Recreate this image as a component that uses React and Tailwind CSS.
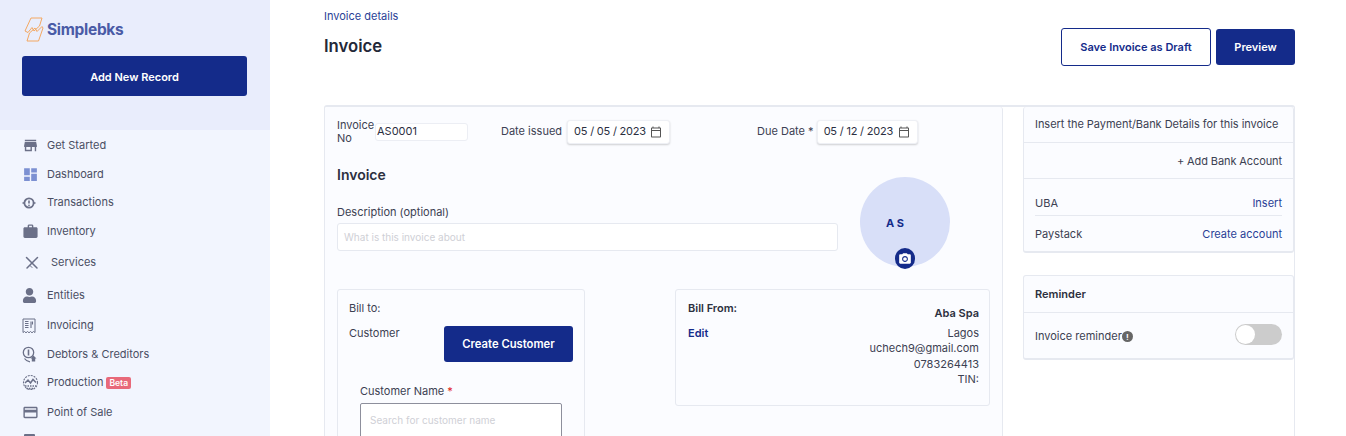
import React from "react";
import { MdStore, MdDashboard, MdWork, MdCreditCard, MdCameraAlt, MdOutlineCalendarToday } from "react-icons/md";
import { FaUser } from "react-icons/fa";

const Logo = () => (
  <svg width="20" height="25" viewBox="0 0 20 25" fill="none" stroke="#f4a862" strokeWidth="1" strokeLinejoin="round">
    <path d="M7 1H18L15.5 9L10 14L8 10.5L4 15.5L1 14Z" />
    <path d="M18 9.5L19 11L14.5 24H3L5.5 16L11 11L13 14.5Z" />
  </svg>
);

const Debtors = () => (
  <svg width="17" height="17" viewBox="0 0 17 17" fill="none" stroke="#6b7088" strokeWidth="1.3">
    <circle cx="6.5" cy="6.5" r="5.2" />
    <path d="M6.5 3.5V9.5" strokeWidth="1.6" />
    <path d="M11.5 9.5L8.5 12.5H9.8V15.5H13.2V12.5H14.5Z" fill="#6b7088" stroke="none" />
    <path d="M2.5 12.5Q4.5 15.5 8 15.8" />
  </svg>
);

const Production = () => (
  <svg width="17" height="17" viewBox="0 0 17 17" fill="none" stroke="#6b7088" strokeWidth="1.1">
    <circle cx="8.5" cy="8.5" r="7" strokeDasharray="2 1" />
    <path d="M3 9L6 6L8.5 9L11 5.5L14 8.5" strokeWidth="1.5" />
    <path d="M3 12H14M4.5 14.5H12.5" strokeDasharray="1.5 1" strokeWidth="1.6" />
  </svg>
);

const Transactions = () => (
  <svg width="14" height="14" viewBox="0 0 14 14" fill="none" stroke="#6b7088">
    <circle cx="7" cy="7" r="4.6" strokeWidth="1.8" />
    <path d="M7 4.4V7.6" strokeWidth="1.6" />
    <circle cx="7" cy="9.4" r="0.8" fill="#6b7088" stroke="none" />
    <path d="M0.5 7H2.6M11.4 7H13.5" strokeWidth="1.3" />
  </svg>
);

const Tools = () => (
  <svg width="14" height="14" viewBox="0 0 14 14" fill="none" stroke="#6b7088" strokeWidth="1.5" strokeLinecap="round">
    <path d="M1.5 1.5L12 12" />
    <path d="M12.5 1.5L2 12" />
    <path d="M5 9.5L7 11.5M9 5L10.5 3.5" strokeWidth="1" />
  </svg>
);

const Receipt = () => (
  <svg width="14" height="16" viewBox="0 0 14 16" fill="none" stroke="#6b7088" strokeWidth="1">
    <path d="M1 1H13V14.5L11.5 13.5L10 14.8L8.5 13.5L7 14.8L5.5 13.5L4 14.8L2.5 13.5L1 14.5Z" />
    <path d="M3 3.5H6.5M3 5.5H6.5M3 7.5H6.5M3 9.5H6.5M9 3.5V10M10.5 3.5V6.5" strokeWidth="1.1" />
  </svg>
);

const Bar = () => (
  <svg width="14" height="16" viewBox="0 0 14 16" fill="#6b7088">
    <rect x="2" y="1" width="11" height="14" rx="1" />
  </svg>
);

const items = [
  { label: "Get Started", icon: <MdStore size={17} color="#6b7088" />, row: "h-[29px]", gap: "w-[25px]" },
  { label: "Dashboard", icon: <MdDashboard size={17} color="#7c90d2" />, row: "h-[28px]", gap: "w-[25px]" },
  { label: "Transactions", icon: <Transactions />, row: "h-[29px]", gap: "w-[25px]" },
  { label: "Inventory", icon: <MdWork size={17} color="#6b7088" />, row: "h-[29px]", gap: "w-[25px]" },
  { label: "Services", icon: <Tools />, row: "h-[33px]", gap: "w-[29px] pl-[3px]" },
  { label: "Entities", icon: <FaUser size={15} color="#6b7088" />, row: "h-[32px]", gap: "w-[25px]" },
  { label: "Invoicing", icon: <Receipt />, row: "h-[29px]", gap: "w-[25px]" },
  { label: "Debtors & Creditors", icon: <Debtors />, row: "h-[28px]", gap: "w-[25px]" },
  { label: "Production", icon: <Production />, row: "h-[29px]", gap: "w-[25px]", beta: true },
  { label: "Point of Sale", icon: <MdCreditCard size={17} color="#6b7088" />, row: "h-[30px]", gap: "w-[25px]" },
  { label: "", icon: <Bar />, row: "h-[28px]", gap: "w-[25px]" },
];

const DateBox = ({ value, className = "" }) => (
  <div className={`flex h-[24px] items-center justify-between rounded-[3px] border border-[#eef0f5] bg-white pl-[6px] pr-[7px] text-[11px] tracking-[-0.2px] text-[#2b2f3f] shadow-[0_1px_2px_rgba(0,0,0,0.18)] ${className}`}>
    <span>{value}</span>
    <MdOutlineCalendarToday size={12} color="#555" />
  </div>
);

export default function App() {
  return (
    <div className="flex h-[436px] overflow-hidden bg-white font-['Inter',sans-serif] text-[11px] text-[#3c4152]">
      <aside className="h-full w-[270px] shrink-0 bg-[#f2f5fe]">
        <div className="h-[130px] bg-[#e9edfc] px-[22px] pt-[17px]">
          <div className="flex h-[25px] items-center gap-[3px] pl-[2px]">
            <Logo />
            <span className="text-[15.5px] font-bold tracking-[-0.3px] text-[#4a5ba6]">Simplebks</span>
          </div>
          <button className="mt-[14px] flex h-[40px] w-[225px] items-center justify-center rounded-[3px] bg-[#142b8a] pt-[2px] text-[11px] font-semibold text-white">
            Add New Record
          </button>
        </div>
        <nav className="flex flex-col pl-[22px] pt-[1px]">
          {items.map((it, i) => (
            <div key={i} className={`flex items-center ${it.row}`}>
              <span className={`flex shrink-0 items-center ${it.gap}`}>{it.icon}</span>
              <span className="text-[#4a4e63]">{it.label}</span>
              {it.beta && (
                <span className="ml-[3px] rounded-[2px] bg-[#e8697a] px-[3px] text-[8.5px] font-semibold leading-[12px] text-white">Beta</span>
              )}
            </div>
          ))}
        </nav>
      </aside>

      <main className="min-w-0 flex-1 pl-[54px] pr-[51px]">
        <div className="flex h-[105px] items-start justify-between">
          <div>
            <p className="mt-[9px] text-[11px] leading-[15px] text-[#2a3f96]">Invoice details</p>
            <h1 className="mt-[7px] text-[16.7px] font-semibold leading-[30px] text-[#232838]">Invoice</h1>
          </div>
          <div className="mt-[28px] flex items-center gap-[5px]">
            <button className="flex h-[38px] w-[150px] items-center justify-center rounded-[3px] border border-[#142b8a] bg-white text-[11px] font-semibold text-[#142b8a]">
              Save Invoice as Draft
            </button>
            <button className="flex h-[36px] w-[79px] items-center justify-center rounded-[3px] bg-[#142b8a] text-[11px] font-semibold text-white">
              Preview
            </button>
          </div>
        </div>

        <div className="flex h-[400px] items-start gap-[20px] rounded-[3px] border-t-2 border-l border-r border-[#e6e9f0]">
          <section className="h-full w-[678px] shrink-0 rounded-[3px] border-r border-[#e6e9f0] bg-[#fbfcff] px-[12px]">
            <div className="flex h-[48px] items-center pt-[1px]">
              <label className="w-[38px] leading-[13px]">Invoice No</label>
              <div className="flex h-[18px] w-[93px] items-center rounded-[3px] border border-[#eceef4] bg-white pl-[1px] text-[#2b2f3f]">AS0001</div>
              <label className="ml-[33px]">Date issued</label>
              <DateBox value="05 / 05 / 2023" className="ml-[5px] w-[103px]" />
              <label className="ml-[87px]">Due Date *</label>
              <DateBox value="05 / 12 / 2023" className="ml-[3px] w-[101px]" />
            </div>
            <div className="flex h-[113px]">
              <div className="w-[501px]">
                <h2 className="mt-[8px] text-[14px] font-semibold leading-[24px] text-[#2c3040]">Invoice</h2>
                <p className="mt-[17px] leading-[16px] text-[#3c4152]">Description (optional)</p>
                <div className="mt-[3px] flex h-[28px] items-center rounded-[3px] border border-[#e6e9f0] bg-white pl-[6px] text-[10px] text-[#cfd0d6]">
                  What is this invoice about
                </div>
              </div>
              <div className="relative ml-[22px] mt-[22px] flex h-[90px] w-[90px] items-center justify-center rounded-full bg-[#d8dff8] pr-[20px] pt-[3px] text-[11px] font-bold text-[#142b8a]">
                A S
                <span className="absolute bottom-[-2px] left-[35px] flex h-[21px] w-[20px] items-center justify-center rounded-full bg-[#142b8a]">
                  <MdCameraAlt size={14} color="white" />
                </span>
              </div>
            </div>
            <div className="mt-[21px] flex items-start gap-[90px]">
              <div className="h-[200px] w-[248px] shrink-0 rounded-[3px] border border-[#e6e9f0] px-[11px] pt-[11px]">
                <p className="leading-[15px]">Bill to:</p>
                <div className="mt-[1px] flex items-start justify-between">
                  <p className="mt-[9px] leading-[15px]">Customer</p>
                  <button className="mt-[9px] flex h-[36px] w-[129px] items-center justify-center rounded-[3px] bg-[#142b8a] text-[11.25px] font-semibold text-white">
                    Create Customer
                  </button>
                </div>
                <div className="pl-[11px] pt-[22px]">
                  <p className="leading-[15px]">Customer Name <span className="text-[#e02020]">*</span></p>
                  <div className="mt-[4px] flex h-[40px] w-[202px] items-start rounded-[2px] border border-[#8d8f9c] bg-white pl-[9px] pt-[9px] text-[10px] text-[#cfd0d6]">
                    Search for customer name
                  </div>
                </div>
              </div>
              <div className="flex h-[117px] w-[316px] justify-between rounded-[3px] border border-[#e6e9f0] pl-[12px] pr-[10px] pt-[11px]">
                <div>
                  <p className="font-semibold leading-[15px] text-[#2c3040]">Bill From:</p>
                  <p className="mt-[10px] font-semibold leading-[15px] text-[#142b8a]">Edit</p>
                </div>
                <div className="pt-[5px] text-right leading-[15.5px]">
                  <p className="mb-[4px] font-semibold text-[#2c3040]">Aba Spa</p>
                  <p>Lagos</p>
                  <p>uchech9@gmail.com</p>
                  <p>0783264413</p>
                  <p>TIN:</p>
                </div>
              </div>
            </div>
          </section>

          <div className="w-[271px] shrink-0">
            <div className="rounded-[3px] border-b-2 border-l border-r border-[#e6e9f0] bg-[#fbfcff]">
              <div className="flex h-[36px] items-center border-b border-[#e6e9f0] px-[11px] tracking-[-0.04px]">Insert the Payment/Bank Details for this invoice</div>
              <div className="flex h-[36px] items-center justify-end border-b border-[#e6e9f0] px-[11px] pt-[1px] tracking-[-0.1px]">+ Add Bank Account</div>
              <div className="mx-[11px] flex h-[37px] items-center justify-between border-b border-[#e6e9f0] pt-[13px]">
                <span>UBA</span>
                <span className="text-[#2a3f96]">Insert</span>
              </div>
              <div className="mx-[11px] flex h-[35px] items-center justify-between pt-[2px]">
                <span>Paystack</span>
                <span className="text-[#2a3f96]">Create account</span>
              </div>
            </div>
            <div className="mt-[22px] rounded-[3px] border-b-2 border-l border-r border-t border-[#e6e9f0] bg-[#fbfcff]">
              <div className="flex h-[37px] items-center border-b border-[#e6e9f0] px-[11px] font-semibold text-[#2c3040]">Reminder</div>
              <div className="flex h-[45px] items-center justify-between px-[11px] pb-[3px]">
                <span className="mt-[5px] flex items-center gap-0">
                  Invoice reminder
                  <span className="flex h-[11px] w-[11px] items-center justify-center rounded-full bg-[#666] text-[8px] font-bold text-white">!</span>
                </span>
                <span className="flex h-[21px] w-[47px] items-center rounded-full bg-[#cccccc] pl-[1px]">
                  <span className="h-[19px] w-[19px] rounded-full bg-white" />
                </span>
              </div>
            </div>
          </div>
        </div>
      </main>
    </div>
  );
}
